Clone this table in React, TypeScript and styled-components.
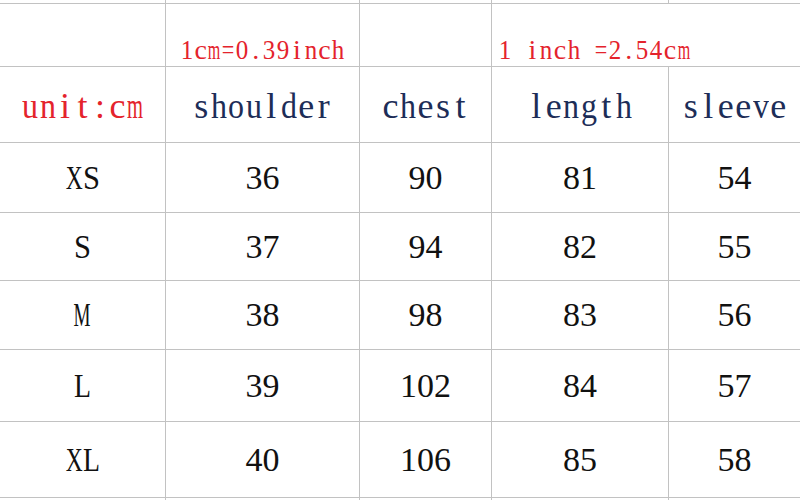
import React from "react"
import styled, { createGlobalStyle } from "styled-components"

const GlobalStyle = createGlobalStyle`
  html, body {
    margin: 0;
    padding: 0;
    background: #fff;
    overflow: hidden;
  }
`

const LINE = "#c2c2c2"

const Sheet = styled.div`
  display: grid;
  grid-template-columns: 166px 194px 132px 177px 1fr;
  grid-template-rows: 4px 63px 76px 70px 68px 69px 72px 76px 3px;
  width: 800px;
  height: 500px;
  overflow: hidden;
`

const Cell = styled.div<{ $align?: "center" | "left"; $bottom?: boolean; $noRight?: boolean }>`
  box-sizing: border-box;
  border-bottom: 1px solid ${LINE};
  border-right: ${p => (p.$noRight ? "none" : `1px solid ${LINE}`)};
  display: flex;
  justify-content: ${p => (p.$align === "left" ? "flex-start" : "center")};
  align-items: ${p => (p.$bottom ? "flex-end" : "center")};
  padding-left: ${p => (p.$align === "left" ? "6px" : "0")};
  white-space: nowrap;
  overflow: visible;
  min-width: 0;
`

// Spreadsheet cells use a half-width CJK font: every latin char sits in an equal slot.
const Line = styled.span<{ $size: number; $color: string; $lift?: number }>`
  display: inline-flex;
  font-family: "Liberation Serif", "Times New Roman", serif;
  font-size: ${p => p.$size}px;
  line-height: 1.15;
  color: ${p => p.$color};
  margin-top: ${p => p.$lift ?? 0}px;
`

const Slot = styled.span<{ $w: number }>`
  display: inline-flex;
  justify-content: center;
  width: ${p => p.$w}px;
`

const Glyph = styled.span<{ $scale: number }>`
  display: inline-block;
  white-space: pre;
  transform: scaleX(${p => p.$scale});
`

const widths: Record<string, number> = {
  a: 0.444, c: 0.444, d: 0.5, e: 0.444, g: 0.5, h: 0.5, i: 0.278, l: 0.278,
  m: 0.778, n: 0.5, o: 0.5, r: 0.333, s: 0.389, t: 0.278, u: 0.5, v: 0.5,
  ":": 0.278, "=": 0.564, ".": 0.25, " ": 0.25,
  X: 0.722, S: 0.556, M: 0.889, L: 0.611,
}

function Mono({
  text, size, cell, fill, color, lift,
}: { text: string; size: number; cell: number; fill: number; color: string; lift?: number }) {
  return (
    <Line $size={size} $color={color} $lift={lift}>
      {text.split("").map((ch, i) => {
        const w = (widths[ch] ?? 0.5) * size
        return (
          <Slot key={i} $w={cell}>
            <Glyph $scale={Math.min(1, fill / w)}>{ch}</Glyph>
          </Slot>
        )
      })}
    </Line>
  )
}

const NAVY = "#1d2d57"
const RED = "#e4232c"

const Head = ({ text, color = NAVY }: { text: string; color?: string }) => (
  <Mono text={text} size={36} cell={17.5} fill={16} color={color} lift={4} />
)

const Note = ({ text }: { text: string }) => (
  <Mono text={text} size={28} cell={13.75} fill={12.5} color={RED} lift={0} />
)

const Value = ({ text }: { text: string }) => (
  <Mono text={text} size={34} cell={17} fill={17} color="#111" />
)

const headers = ["shoulder", "chest", "length", "sleeve"]

const rows: [string, number, number, number, number][] = [
  ["XS", 36, 90, 81, 54],
  ["S", 37, 94, 82, 55],
  ["M", 38, 98, 83, 56],
  ["L", 39, 102, 84, 57],
  ["XL", 40, 106, 85, 58],
]

export default function App() {
  return (
    <>
      <GlobalStyle />
      <Sheet>
        {/* sliver of the row above */}
        {[0, 1, 2, 3, 4].map(i => (
          <Cell key={`top-${i}`} $noRight={i === 4} />
        ))}

        {/* conversion notes */}
        <Cell />
        <Cell $bottom>
          <Note text="1cm=0.39inch" />
        </Cell>
        <Cell />
        <Cell $bottom $align="left" $noRight>
          <Note text="1 inch =2.54cm" />
        </Cell>
        <Cell $noRight />

        {/* header */}
        <Cell>
          <Head text="unit:cm" color={RED} />
        </Cell>
        {headers.map((h, i) => (
          <Cell key={h} $noRight={i === headers.length - 1}>
            <Head text={h} />
          </Cell>
        ))}

        {rows.map(([size, ...values]) => (
          <React.Fragment key={size}>
            <Cell>
              <Value text={size} />
            </Cell>
            {values.map((v, i) => (
              <Cell key={i} $noRight={i === values.length - 1}>
                <Value text={String(v)} />
              </Cell>
            ))}
          </React.Fragment>
        ))}

        {[0, 1, 2, 3, 4].map(i => (
          <Cell key={`bottom-${i}`} $noRight={i === 4} />
        ))}
      </Sheet>
    </>
  )
}
